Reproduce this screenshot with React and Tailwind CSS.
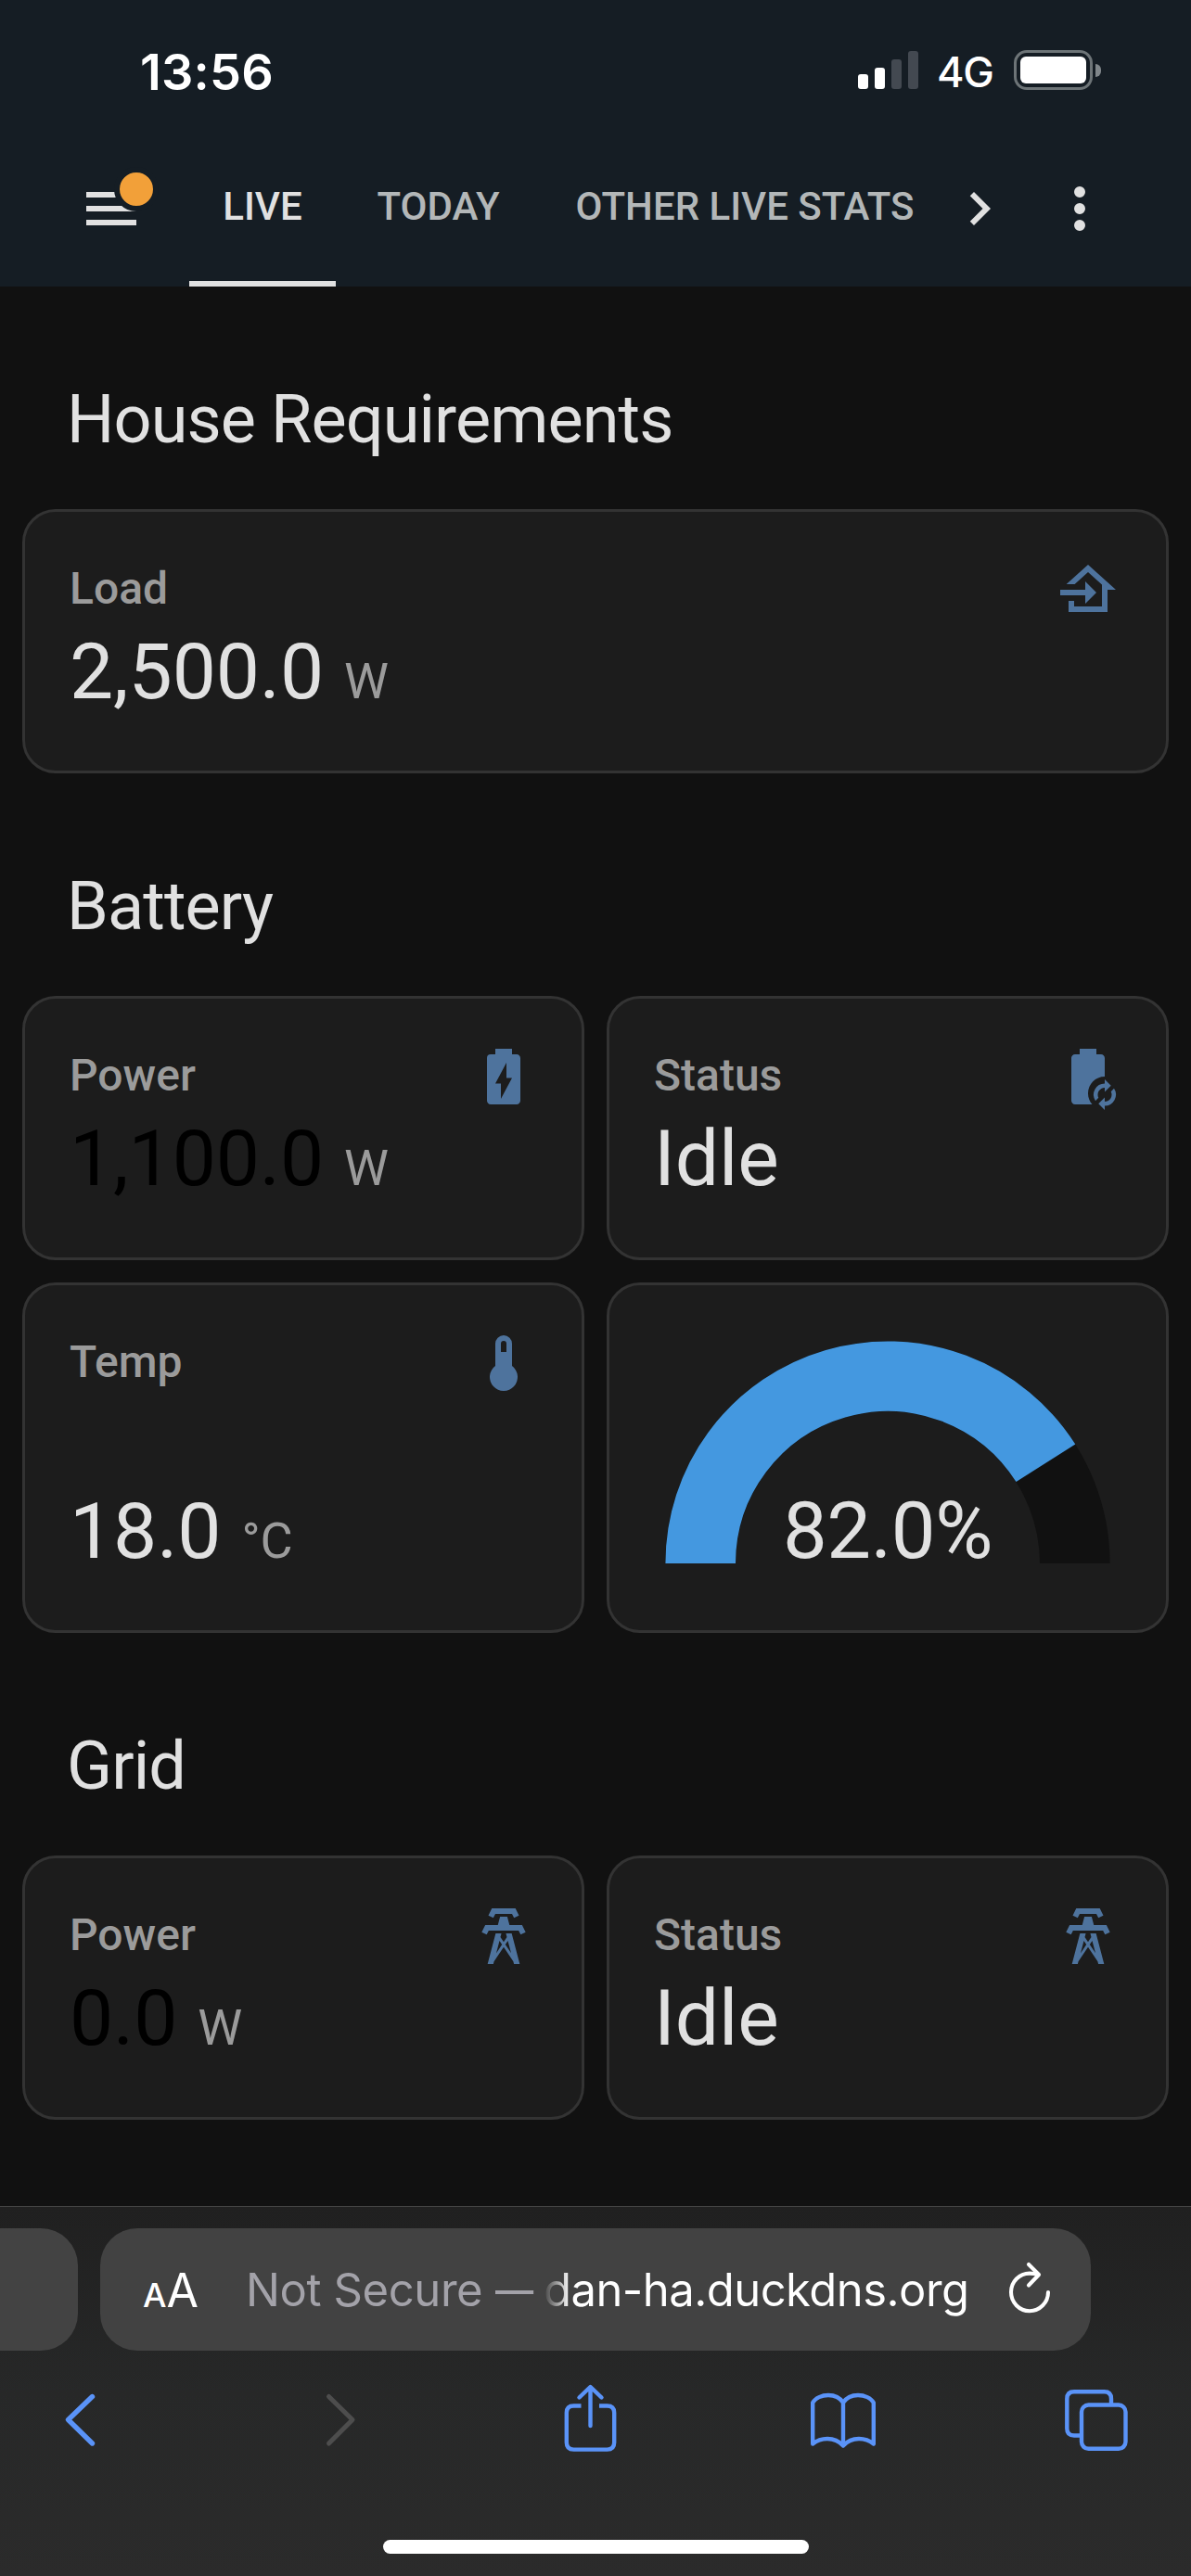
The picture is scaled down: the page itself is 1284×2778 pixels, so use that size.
const ICONS = {
  homeImport:
    "M15 13L11 17V14H2V12H11V9L15 13M5 20V16H7V18H17V10.19L12 5.69L7.21 10H4.22L12 3L22 12H19V20H5Z",
  batteryCharging:
    "M16.67 4H15V2H9V4H7.33A1.33 1.33 0 0 0 6 5.33V20.66C6 21.4 6.6 22 7.33 22H16.66C17.4 22 18 21.4 18 20.67V5.33C18 4.6 17.4 4 16.67 4M11 20V14.5H9L13 7V12.5H15L11 20Z",
  batterySync:
    "M18 12V5.33C18 4.6 17.4 4 16.67 4H15V2H9V4H7.33C6.6 4 6 4.6 6 5.33V20.67C6 21.4 6.6 22 7.33 22H13.5C12.55 20.95 12 19.55 12 18C12 14.7 14.7 12 18 12M18 14.5V13L20.25 15.25L18 17.5V16A2.5 2.5 0 0 0 15.76 19.62L14.67 20.71A4 4 0 0 1 18 14.5M18 24L15.75 21.75L18 19.5V21A2.5 2.5 0 0 0 20.24 17.38L21.33 16.29A4 4 0 0 1 18 22.5V24Z",
  thermometer:
    "M15 13V5A3 3 0 0 0 9 5V13A5 5 0 1 0 15 13M12 4A1 1 0 0 1 13 5V8H11V5A1 1 0 0 1 12 4Z",
  tower:
    "M8.28 5.45L6.5 4.55L7.76 2H16.23L17.5 4.55L15.72 5.44L15 4H9L8.28 5.45M18.62 8H14.09L13.3 5H10.7L9.91 8H5.38L4.1 10.55L5.89 11.44L6.62 10H17.38L18.1 11.45L19.89 10.56L18.62 8M17.77 22H15.7L15.46 21.1L12 15.9L8.53 21.1L8.3 22H6.23L9.12 11H11.19L10.83 12.35L12 14.1L13.16 12.35L12.81 11H14.88L17.77 22M11.4 15L10.5 13.65L9.32 18.13L11.4 15M14.68 18.12L13.5 13.64L12.6 15L14.68 18.12Z",
  menu: "M3 6H21V8H3V6M3 11H21V13H3V11M3 16H21V18H3V16Z",
  chevronRight: "M8.59 16.58L13.17 12L8.59 7.41L10 6L16 12L10 18L8.59 16.58Z",
  dotsVertical:
    "M12 16A2 2 0 1 1 12 20A2 2 0 1 1 12 16M12 10A2 2 0 1 1 12 14A2 2 0 1 1 12 10M12 4A2 2 0 1 1 12 8A2 2 0 1 1 12 4Z",
};

function Icon({ name, className = "" }) {
  return (
    <svg viewBox="0 0 24 24" fill="currentColor" className={`size-[72px] shrink-0 ${className}`}>
      <path d={ICONS[name]} fillRule="evenodd" />
    </svg>
  );
}

function StatusBar() {
  return (
    <div className="flex h-[151px] items-start justify-between pt-[47px] pl-[151px] pr-[97px] font-['Inter'] text-white">
      <div className="pt-px text-[54px] leading-[60px] font-semibold tracking-[0.2px]">13:56</div>
      <div className="flex items-start">
        <div className="mt-2 flex h-[41px] items-end gap-[7px]">
          <div className="h-4 w-[11px] rounded-[3px] bg-white" />
          <div className="h-[23px] w-[11px] rounded-[3px] bg-white" />
          <div className="h-8 w-[11px] rounded-[3px] bg-[#434951]" />
          <div className="h-[41px] w-[11px] rounded-[3px] bg-[#434951]" />
        </div>
        <div className="ml-[20px] w-[64px] pt-px text-[45px] leading-[60px] font-medium tracking-[-1.2px]">4G</div>
        <div className="mt-[7px] ml-[19px] flex items-center gap-[3px]">
          <div className="h-[43px] w-[85px] rounded-[14px] border-[3px] border-[#6d7477] p-1">
            <div className="h-full rounded-[6px] bg-white" />
          </div>
          <div className="h-[14px] w-[6px] rounded-r-full bg-[#80868a]" />
        </div>
      </div>
    </div>
  );
}

function Header() {
  return (
    <header className="h-[309px] bg-[#151d24] text-[#e1e1e1]">
      <StatusBar />
      <div className="flex h-[158px] items-start pl-[84px]">
        <div className="relative mt-[38px] size-[72px]">
          <Icon name="menu" />
          <span className="absolute top-[-9px] left-[39px] size-12 rounded-full border-[6px] border-[#151d24] bg-[#f2a039]" />
        </div>
        <nav className="ml-12 flex h-full w-[816px] text-[42px] leading-[60px] font-medium whitespace-nowrap">
          <div className="h-full w-[158px] shrink-0 border-b-[6px] border-[#e1e1e1] pt-[42px] text-center">LIVE</div>
          <div className="h-full w-[221px] shrink-0 pt-[42px] text-center text-[#b3b7b8]">TODAY</div>
          <div className="h-full w-[440px] shrink-0 pt-[42px] text-center text-[#b3b7b8]">OTHER LIVE STATS</div>
        </nav>
        <Icon name="chevronRight" className="mt-[38px]" />
        <Icon name="dotsVertical" className="mt-[38px] ml-9" />
      </div>
    </header>
  );
}

function Title({ children }) {
  return (
    <h1 className="mt-[102px] mb-[54px] ml-12 h-[84px] text-[72px] leading-[84px] tracking-[-0.0125em] text-[#e1e1e1]">
      {children}
    </h1>
  );
}

function Card({ className = "", children }) {
  return (
    <section className={`rounded-[36px] border-[3px] border-[#333333] bg-[#1c1c1c] ${className}`}>
      {children}
    </section>
  );
}

function EntityCard({ label, value, unit, icon, tall = false, dark = false }) {
  return (
    <Card className={`flex flex-col justify-between px-12 pb-16 ${tall ? "h-[378px]" : "h-[285px]"}`}>
      <div className="flex items-start justify-between">
        <span className="mt-[59px] text-[48px] leading-[48px] font-medium text-[#9b9b9b]">{label}</span>
        <Icon name={icon} className="mt-12 text-[#4e739d]" />
      </div>
      <div className="flex h-[84px] items-baseline gap-[22px] text-[84px] leading-[84px] tracking-[-0.1px] whitespace-nowrap">
        <span className={dark ? "text-black" : "text-[#e1e1e1]"}>{value}</span>
        {unit && <span className="text-[54px] leading-[54px] text-[#9b9b9b]">{unit}</span>}
      </div>
    </Card>
  );
}

function GaugeCard({ percent }) {
  const angle = Math.PI * (1 - percent / 100);
  const x = 240 + 201.8 * Math.cos(angle);
  const y = 240 - 201.8 * Math.sin(angle);
  return (
    <Card className="flex h-[378px] justify-center pt-[60px]">
      <div className="relative h-[240px] w-[480px]">
        <svg viewBox="0 0 480 240" className="h-[240px] w-[480px]" fill="none" strokeWidth="75.6">
          <path d="M38.2 240A201.8 201.8 0 0 1 441.8 240" stroke="#111111" />
          <path d={`M38.2 240A201.8 201.8 0 0 1 ${x} ${y}`} stroke="#4498e0" />
        </svg>
        <div className="absolute inset-x-0 bottom-[-7px] text-center text-[85px] leading-[84px] tracking-[-0.4px] text-[#e1e1e1]">
          {percent.toFixed(1)}%
        </div>
      </div>
    </Card>
  );
}

function BrowserBar() {
  return (
    <footer className="flex h-[399px] flex-col border-t border-[#444444] bg-linear-to-b from-[#202020] via-[#272828] to-[#2b2b2b] font-['Inter']">
      <div className="mt-[23px] flex h-[132px] gap-6">
        <div className="w-[84px] rounded-r-[40px] bg-[#434343]" />
        <div className="flex w-[1068px] items-start rounded-[40px] bg-[#424242] whitespace-nowrap text-white">
          <div className="mt-[37px] ml-[46px] w-[62px] text-[50px] leading-[60px]">
            <span className="text-[36px] font-medium">A</span>
            <span>A</span>
          </div>
          <div className="mt-[37px] ml-[49px] w-[321px] text-[49px] leading-[60px] tracking-[-0.4px] text-[#a3a2a9]">
            Not Secure <span className="inline-block origin-left scale-x-[.84]">—</span>
          </div>
          <div className="mt-[37px] w-[464px] bg-linear-to-r from-[#424242] to-white to-[28px] bg-clip-text text-[49px] leading-[60px] tracking-[-0.55px] text-transparent">
            dan-ha.duckdns.org
          </div>
          <svg
            viewBox="0 0 50 60"
            className="mt-[34px] ml-[35px] h-[60px] w-[50px]"
            fill="none"
            stroke="currentColor"
            strokeWidth="4.1"
            strokeLinecap="round"
            strokeLinejoin="round"
          >
            <path d="M34 16.2C31 15 28 14.6 25 14.6A20 20.3 0 1 0 45 35" />
            <path d="M24 5L35 16L24 27.5" />
          </svg>
        </div>
      </div>
      <div className="mt-[35px] flex h-[78px] text-[#5a93f8]">
        <svg viewBox="0 0 40 78" className="ml-[66px] h-[78px] w-10" fill="none" stroke="currentColor" strokeWidth="5.4" strokeLinecap="round" strokeLinejoin="round">
          <path d="M33.5 14.5L7.5 39.5L33.5 65" />
        </svg>
        <svg viewBox="0 0 40 78" className="ml-[241px] h-[78px] w-10 text-[#4d4d4d]" fill="none" stroke="currentColor" strokeWidth="5" strokeLinecap="round" strokeLinejoin="round">
          <path d="M7.5 14.5L33 39.5L7.5 65" />
        </svg>
        <svg viewBox="0 0 60 78" className="ml-[219px] h-[78px] w-[60px]" fill="none" stroke="currentColor" strokeWidth="4.4" strokeLinecap="round" strokeLinejoin="round">
          <path strokeLinecap="butt" d="M20.5 24.5H12.5Q4.8 24.5 4.8 32V64Q4.8 71.6 12.5 71.6H48.5Q56.2 71.6 56.2 64V32Q56.2 24.5 48.5 24.5H40" />
          <path d="M30.5 46V4.5M18.5 15.5L30.5 4L42.5 15.5" />
        </svg>
        <svg viewBox="0 0 76 78" className="ml-[205px] h-[78px] w-[76px]" fill="none" stroke="currentColor" strokeWidth="4.4" strokeLinecap="round" strokeLinejoin="round">
          <path d="M38 21C34 15 28 13 22 13C15 13 8 16 5.2 21V65.5C10 61.5 15 60 21 60C28 60 33 62 38 67.5C43 62 48 60 55 60C61 60 66 61.5 70.8 65.5V21C68 16 61 13 54 13C48 13 42 15 38 21ZM38 21V67" />
        </svg>
        <svg viewBox="0 0 72 78" className="ml-[199px] h-[78px] w-[72px]" fill="none" stroke="currentColor" strokeWidth="4.4">
          <path d="M18.5 56.5H12Q4.3 56.5 4.3 49V17Q4.3 9.3 12 9.3H44.5Q52 9.3 52 17V23.5" />
          <rect x="20" y="23.5" width="47.5" height="47.3" rx="7.5" />
        </svg>
      </div>
      <div className="mt-[91px] ml-[413px] h-[15px] w-[459px] rounded-full bg-white" />
    </footer>
  );
}

export default function App() {
  return (
    <div className="flex h-[2778px] w-[1284px] flex-col overflow-hidden bg-[#111111] font-['Roboto']">
      <Header />
      <main className="flex flex-1 flex-col px-6">
        <Title>House Requirements</Title>
        <EntityCard label="Load" value="2,500.0" unit="W" icon="homeImport" />
        <Title>Battery</Title>
        <div className="grid grid-cols-2 gap-6">
          <EntityCard label="Power" value="1,100.0" unit="W" icon="batteryCharging" dark />
          <EntityCard label="Status" value="Idle" icon="batterySync" />
          <EntityCard label="Temp" value="18.0" unit="°C" icon="thermometer" tall />
          <GaugeCard percent={82} />
        </div>
        <Title>Grid</Title>
        <div className="grid grid-cols-2 gap-6">
          <EntityCard label="Power" value="0.0" unit="W" icon="tower" dark />
          <EntityCard label="Status" value="Idle" icon="tower" />
        </div>
      </main>
      <BrowserBar />
    </div>
  );
}
